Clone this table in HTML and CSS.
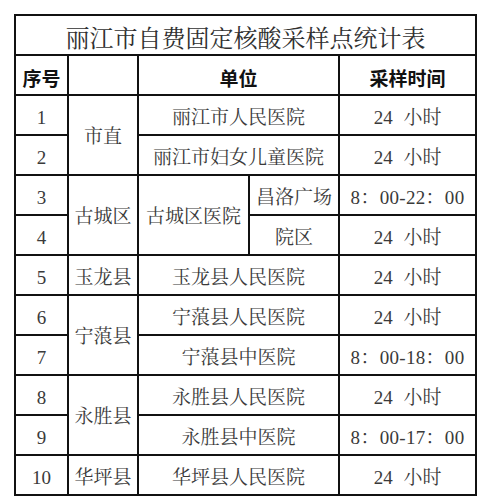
FILE: index.html
```html
<!DOCTYPE html>
<html lang="zh-CN">
<head>
<meta charset="utf-8">
<title>丽江市自费固定核酸采样点统计表</title>
<link rel="stylesheet" href="styles.css">
</head>
<body>
<table class="sheet">
  <colgroup>
    <col class="c-no">
    <col class="c-area">
    <col class="c-org">
    <col class="c-site">
    <col class="c-time">
  </colgroup>
  <tr class="title-row"><td colspan="5" class="title">丽江市自费固定核酸采样点统计表</td></tr>
  <tr class="head"><th>序号</th><th></th><th colspan="2">单位</th><th>采样时间</th></tr>
  <tr><td>1</td><td rowspan="2" class="merged">市直</td><td colspan="2">丽江市人民医院</td><td class="time">24 小时</td></tr>
  <tr><td>2</td><td colspan="2">丽江市妇女儿童医院</td><td class="time">24 小时</td></tr>
  <tr><td>3</td><td rowspan="2" class="merged">古城区</td><td rowspan="2" class="merged">古城区医院</td><td>昌洛广场</td><td class="hours">8：00-22：00</td></tr>
  <tr><td>4</td><td>院区</td><td class="time">24 小时</td></tr>
  <tr><td>5</td><td>玉龙县</td><td colspan="2">玉龙县人民医院</td><td class="time">24 小时</td></tr>
  <tr><td>6</td><td rowspan="2" class="merged">宁蒗县</td><td colspan="2">宁蒗县人民医院</td><td class="time">24 小时</td></tr>
  <tr><td>7</td><td colspan="2">宁蒗县中医院</td><td class="hours">8：00-18：00</td></tr>
  <tr><td>8</td><td rowspan="2" class="merged">永胜县</td><td colspan="2">永胜县人民医院</td><td class="time">24 小时</td></tr>
  <tr><td>9</td><td colspan="2">永胜县中医院</td><td class="hours">8：00-17：00</td></tr>
  <tr><td>10</td><td>华坪县</td><td colspan="2">华坪县人民医院</td><td class="time">24 小时</td></tr>
</table>
</body>
</html>
```
FILE: styles.css
```css
html, body {
  margin: 0;
  background: #ffffff;
}

.sheet {
  border-collapse: collapse;
  table-layout: fixed;
  width: 463px;
  margin: 14px 0 0 14px;
  font-family: "Liberation Serif", "Noto Serif CJK SC", "Noto Sans CJK SC", serif;
  font-size: 19px;
  font-weight: 400;
  color: #3a3a3a;
}

.c-no { width: 53px; }
.c-area { width: 70px; }
.c-org { width: 111px; }
.c-site { width: 90px; }
.c-time { width: 137px; }

.sheet tr {
  height: 40px;
}

.sheet td,
.sheet th {
  border: 2px solid #111111;
  padding: 4px 0 0 0;
  text-align: center;
  vertical-align: middle;
  white-space: nowrap;
  line-height: 1;
}

.sheet td.merged {
  padding-top: 2px;
}

.sheet td.title {
  font-size: 24px;
  padding-top: 7px;
  color: #303030;
}

.sheet th {
  font-family: "Noto Sans CJK SC", sans-serif;
  font-weight: 700;
  font-size: 19px;
  color: #111111;
}

.time {
  word-spacing: 6px;
}

.hours {
  letter-spacing: 0.3px;
}
```
